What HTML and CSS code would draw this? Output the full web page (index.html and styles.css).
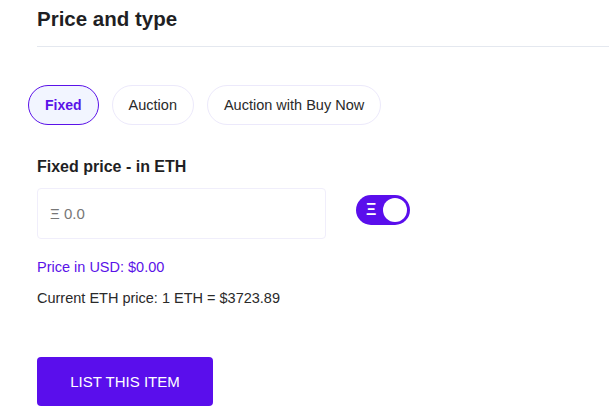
FILE: index.html
```html
<!DOCTYPE html>
<html lang="en">
<head>
  <meta charset="UTF-8">
  <meta name="viewport" content="width=device-width, initial-scale=1.0">
  <title>Price and type</title>
  <link rel="stylesheet" href="styles.css">
</head>
<body>
  <div class="panel">
    <h2 class="section-title">Price and type</h2>

    <div class="sale-types">
      <button class="pill active">Fixed</button>
      <button class="pill">Auction</button>
      <button class="pill">Auction with Buy Now</button>
    </div>

    <label class="field-label" for="price">Fixed price - in ETH</label>
    <div class="price-row">
      <input class="price-input" id="price" type="text" placeholder="&Xi; 0.0">
      <label class="switch">
        <input type="checkbox" checked>
        <span class="track"><span class="eth">&Xi;</span><span class="knob"></span></span>
      </label>
    </div>

    <p class="usd">Price in USD: $0.00</p>
    <p class="rate">Current ETH price: 1 ETH = $3723.89</p>

    <button class="list-btn">LIST THIS ITEM</button>
  </div>
</body>
</html>
```

FILE: styles.css
```css
body {
  margin: 0;
  background: #fff;
  color: #222;
  font-family: "Liberation Sans", Arial, sans-serif;
}
.panel {
  padding: 7px 0 0 37px;
}
.section-title {
  margin: 0;
  font-size: 20.5px;
  line-height: 24px;
  font-weight: bold;
  color: #1f1f24;
  padding-bottom: 15px;
  border-bottom: 1px solid #e4e8ef;
}
.sale-types {
  display: flex;
  gap: 13px;
  margin: 38px 0 0 -9px;
}
.pill {
  height: 40px;
  padding: 0 16px;
  border: 1px solid #ece9fb;
  border-radius: 20px;
  background: #fff;
  color: #2a2a2a;
  font-family: inherit;
  font-size: 14.5px;
  cursor: pointer;
}
.pill.active {
  border-color: #5a12e8;
  background: #f2f5ff;
  color: #5a12e8;
  font-weight: bold;
  font-size: 14px;
}
.field-label {
  display: block;
  margin-top: 32px;
  font-size: 16px;
  line-height: 20px;
  font-weight: bold;
  color: #1f1f24;
}
.price-row {
  display: flex;
  align-items: center;
  gap: 30px;
  margin-top: 11px;
}
.price-input {
  box-sizing: border-box;
  width: 289px;
  height: 51px;
  padding: 0 12px;
  border: 1px solid #f0eefb;
  border-radius: 4px;
  font-family: inherit;
  font-size: 15px;
  color: #333;
  outline: none;
}
.price-input::placeholder {
  color: #777;
}
.switch {
  position: relative;
  margin-top: -8px;
  cursor: pointer;
}
.switch input {
  position: absolute;
  opacity: 0;
}
.track {
  display: flex;
  align-items: center;
  justify-content: space-between;
  box-sizing: border-box;
  width: 54px;
  height: 30px;
  padding: 0 3px 0 10px;
  border-radius: 15px;
  background: #5a0eec;
}
.eth {
  color: #fff;
  font-size: 16px;
  font-weight: bold;
}
.knob {
  width: 24px;
  height: 24px;
  border-radius: 50%;
  background: #fff;
}
.usd, .rate {
  margin: 0;
  font-size: 14.5px;
  line-height: 20px;
}
.usd {
  margin-top: 18px;
  color: #5a12e8;
}
.rate {
  margin-top: 11px;
  color: #2a2a2a;
}
.list-btn {
  margin-top: 49px;
  width: 176px;
  height: 49px;
  border: none;
  border-radius: 4px;
  background: #5a0eec;
  color: #fff;
  font-family: inherit;
  font-size: 15px;
  cursor: pointer;
}
```
